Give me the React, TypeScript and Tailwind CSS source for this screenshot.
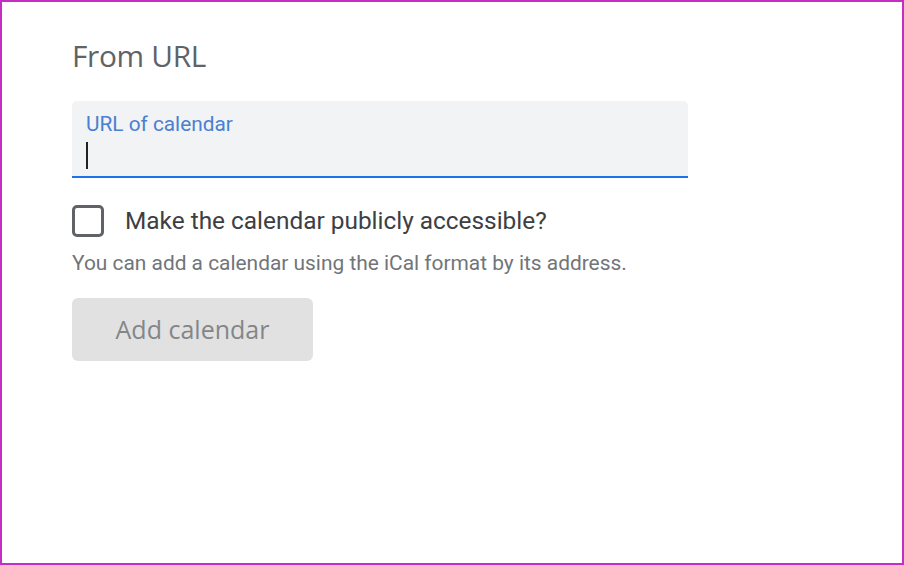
export default function App() {
  return (
    <div className="w-[904px] h-[565px] border-2 border-[#c42ec4] bg-white box-border overflow-hidden">
      <div className="pl-[70px] pt-[34px]">
        <h1 className="text-[29.8px] leading-[40px] text-[#5f6368] tracking-[-0.3px]" style={{ fontFamily: '"Open Sans", sans-serif' }}>
          From URL
        </h1>
        <div className="mt-[25px] w-[616px] h-[77px] bg-[#f1f3f4] rounded-t-[5px] border-b-2 border-[#1a73e8] relative">
          <div className="pl-[14px] pt-[10px] text-[20.8px] leading-[26px] text-[#4a80d0]" style={{ fontFamily: 'Roboto, sans-serif' }}>
            URL of calendar
          </div>
          <div className="ml-[14px] mt-[5px] w-[2px] h-[27px] bg-[#202124]" />
        </div>
        <div className="mt-[27px] flex items-center">
          <div className="w-[32px] h-[32px] border-[3px] border-[#5f6368] rounded-[5px] box-border" />
          <span className="ml-[21px] text-[24.4px] leading-[30px] text-[#3c4043]" style={{ fontFamily: 'Roboto, sans-serif' }}>
            Make the calendar publicly accessible?
          </span>
        </div>
        <p className="mt-[13px] text-[20.9px] leading-[26px] text-[#70757a]" style={{ fontFamily: 'Roboto, sans-serif' }}>
          You can add a calendar using the iCal format by its address.
        </p>
        <div className="mt-[22px] w-[241px] h-[63px] bg-[#e1e1e1] rounded-[6px] flex items-center justify-center">
          <span className="text-[25px] text-[#838689]" style={{ fontFamily: '"Open Sans", sans-serif' }}>
            Add calendar
          </span>
        </div>
      </div>
    </div>
  );
}
